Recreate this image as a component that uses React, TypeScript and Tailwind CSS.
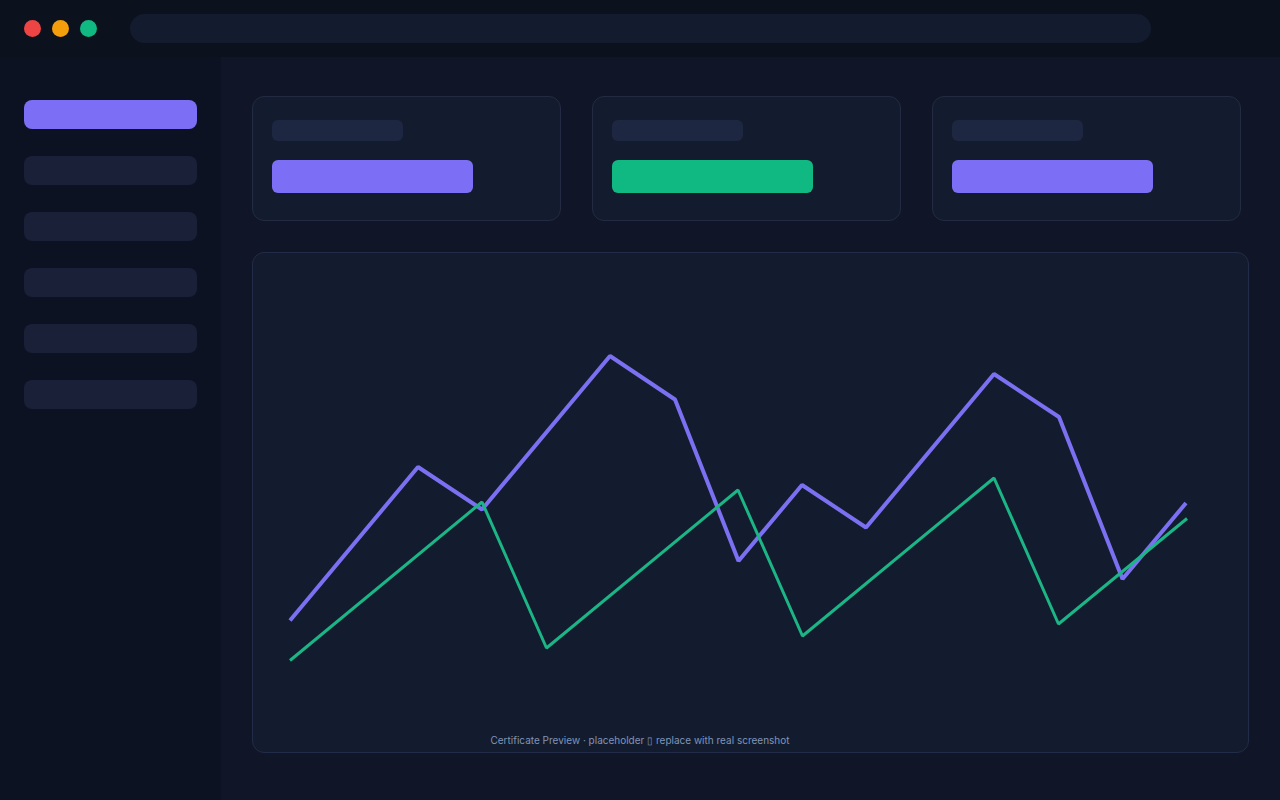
import React, { useState } from 'react';
import clsx from 'clsx';

interface Point {
  x: number;
  y: number;
}

interface Stat {
  id: string;
  color: string;
}

const windowButtons = [
  { label: 'Close', color: 'bg-[#ef4444]' },
  { label: 'Minimize', color: 'bg-[#f59e0b]' },
  { label: 'Maximize', color: 'bg-[#10b981]' },
];

const navItems = ['Overview', 'Courses', 'Certificates', 'Reports', 'Team', 'Settings'];

const stats: Stat[] = [
  { id: 'issued', color: 'bg-[#7c6ff6]' },
  { id: 'verified', color: 'bg-[#10b981]' },
  { id: 'pending', color: 'bg-[#7c6ff6]' },
];

const primarySeries: Point[] = [
  { x: 38, y: 368.5 },
  { x: 166, y: 215 },
  { x: 230, y: 257.5 },
  { x: 358, y: 104 },
  { x: 423, y: 147.5 },
  { x: 486.5, y: 309 },
  { x: 550, y: 233 },
  { x: 614, y: 275.5 },
  { x: 742, y: 122 },
  { x: 807, y: 165 },
  { x: 870.5, y: 327 },
  { x: 934, y: 251 },
];

const secondarySeries: Point[] = [
  { x: 38, y: 408.5 },
  { x: 230, y: 250 },
  { x: 294.5, y: 396 },
  { x: 486, y: 238 },
  { x: 550.5, y: 384 },
  { x: 742, y: 226 },
  { x: 806.5, y: 372 },
  { x: 935, y: 266.5 },
];

const toPoints = (series: Point[]) => series.map(({ x, y }) => `${x},${y}`).join(' ');

const TopBar: React.FC = () => (
  <header className="flex items-center h-[57px] pl-6 pr-[129px] bg-[#0b111d]">
    <div className="flex gap-[11px]">
      {windowButtons.map(({ label, color }) => (
        <button key={label} aria-label={label} className={clsx('size-[17px] rounded-full', color)} />
      ))}
    </div>
    <input
      type="text"
      aria-label="Address"
      className="flex-1 min-w-0 h-[29px] ml-[33px] px-4 rounded-full bg-[#131c2e] text-xs text-[#8094b8] outline-none"
    />
  </header>
);

const Sidebar: React.FC = () => {
  const [active, setActive] = useState(navItems[0]);

  return (
    <nav className="flex flex-col gap-[27px] w-[221px] shrink-0 px-6 pt-[43px] bg-[#0c1222]">
      {navItems.map((item) => (
        <a
          key={item}
          href={`#${item.toLowerCase()}`}
          aria-label={item}
          onClick={() => setActive(item)}
          className={clsx('block h-[29px] rounded-lg', item === active ? 'bg-[#7c6ff6]' : 'bg-[#1a2038]')}
        />
      ))}
    </nav>
  );
};

const StatCard: React.FC<{ stat: Stat }> = ({ stat }) => (
  <div className="h-[125px] px-[19px] pt-[23px] rounded-xl border border-[#222b42] bg-[#131c2e]">
    <div className="w-[131px] h-[21px] rounded-md bg-[#1e2742]" />
    <div className={clsx('w-[201px] h-[33px] mt-[19px] rounded-md', stat.color)} />
  </div>
);

const ChartCard: React.FC = () => (
  <section className="relative rounded-xl border border-[#222b48] bg-[#131c2e]">
    <svg viewBox="1 1 995 499" className="block w-full h-auto" fill="none" strokeLinejoin="bevel">
      <polyline points={toPoints(primarySeries)} stroke="#7c70f2" strokeWidth="4" />
      <polyline points={toPoints(secondarySeries)} stroke="#1cb585" strokeWidth="3" />
    </svg>
    <p className="absolute inset-x-0 bottom-1 pr-[221px] text-center font-[Inter,sans-serif] text-[10px] leading-4 text-[#8094b8]">
      Certificate Preview · placeholder ▯ replace with real screenshot
    </p>
  </section>
);

const App: React.FC = () => {
  return (
    <div className="flex flex-col min-h-screen bg-[#101628]">
      <TopBar />
      <div className="flex flex-1">
        <Sidebar />
        <main className="flex-1 min-w-0 px-[31px] pt-[39px] pb-[47px]">
          <div className="grid grid-cols-3 gap-[31px] pr-2 mb-[31px]">
            {stats.map((stat) => (
              <StatCard key={stat.id} stat={stat} />
            ))}
          </div>
          <ChartCard />
        </main>
      </div>
    </div>
  );
};

export default App;
